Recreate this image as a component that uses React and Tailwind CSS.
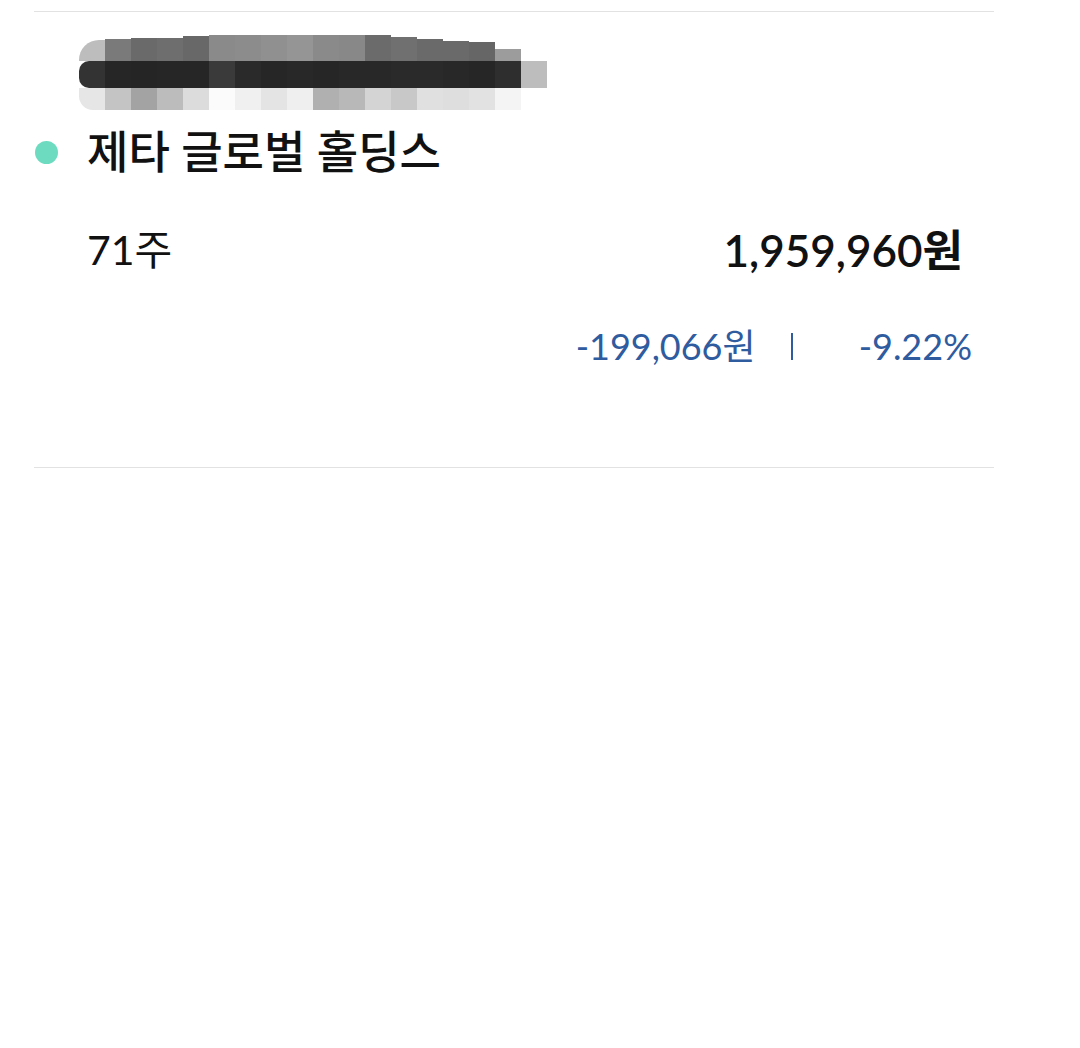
// Holdings row: stock name, share count, value and return
const FONT = { fontFamily: 'Lato, "Noto Sans CJK KR", "Noto Sans", sans-serif' }

// redaction mosaic, one entry per 26px column: [top, middle, bottom]
const MOSAIC = [
  ['h-[21px] mt-[5px] bg-[#bdbdbd] rounded-tl-[20px]', 'bg-[#333333] rounded-l-[10px]', 'bg-[#e6e6e6] rounded-bl-[14px]'],
  ['h-[22px] mt-[4px] bg-[#7a7a7a]', 'bg-[#262626]', 'bg-[#c4c4c4]'],
  ['h-[23px] mt-[3px] bg-[#6a6a6a]', 'bg-[#252525]', 'bg-[#a3a3a3]'],
  ['h-[23px] mt-[3px] bg-[#6e6e6e]', 'bg-[#262626]', 'bg-[#bcbcbc]'],
  ['h-[25px] mt-[1px] bg-[#686868]', 'bg-[#262626]', 'bg-[#dcdcdc]'],
  ['h-[26px] bg-[#8a8a8a]', 'bg-[#3a3a3a]', 'bg-[#fbfbfb]'],
  ['h-[26px] bg-[#8c8c8c]', 'bg-[#2a2a2a]', 'bg-[#f0f0f0]'],
  ['h-[26px] bg-[#909090]', 'bg-[#262626]', 'bg-[#e4e4e4]'],
  ['h-[26px] bg-[#959595]', 'bg-[#282828]', 'bg-[#efefef]'],
  ['h-[26px] bg-[#8a8a8a]', 'bg-[#262626]', 'bg-[#b0b0b0]'],
  ['h-[26px] bg-[#888888]', 'bg-[#282828]', 'bg-[#b8b8b8]'],
  ['h-[26px] bg-[#6b6b6b]', 'bg-[#282828]', 'bg-[#d4d4d4]'],
  ['h-[24px] mt-[2px] bg-[#707070]', 'bg-[#2a2a2a]', 'bg-[#c8c8c8]'],
  ['h-[22px] mt-[4px] bg-[#6a6a6a]', 'bg-[#2a2a2a]', 'bg-[#e0e0e0]'],
  ['h-[20px] mt-[6px] bg-[#6a6a6a]', 'bg-[#282828]', 'bg-[#dedede]'],
  ['h-[19px] mt-[7px] bg-[#666666]', 'bg-[#262626]', 'bg-[#e2e2e2]'],
  ['h-[12px] mt-[14px] bg-[#9c9c9c]', 'bg-[#2e2e2e]', 'bg-[#f4f4f4]'],
  ['h-[26px] bg-transparent', 'bg-[#bdbdbd]', 'bg-transparent'],
]

function Mosaic() {
  return (
    <div className="flex pl-[45px]">
      {MOSAIC.map(([top, mid, bot], i) => (
        <div key={i} className="flex flex-col w-[26px]">
          <div className={top} />
          <div className={`h-[27px] ${mid}`} />
          <div className={`h-[22px] ${bot}`} />
        </div>
      ))}
    </div>
  )
}

export default function App() {
  return (
    <div className="w-[1080px] h-[1048px] bg-white px-[34px] pr-[86px]" style={FONT}>
      <div className="pt-[11px]">
        <div className="border-t border-[#e2e2e2]" />
      </div>

      <div className="h-[112px] pt-[23px]">
        <Mosaic />
      </div>

      <div className="flex items-center h-[56px]">
        <span className="ml-px w-[23px] h-[23px] rounded-full bg-[#6cdbc0]" />
        <span className="ml-[29px] text-[45px] leading-[56px] font-medium text-[#111111]">
          제타 글로벌 홀딩스
        </span>
      </div>

      <div className="mt-[42px] flex items-center justify-between h-[56px] pl-[53px] pr-[31px]">
        <span className="text-[41px] leading-[56px] text-[#111111]">71주</span>
        <span className="text-[44px] leading-[56px] font-semibold text-[#111111]">1,959,960원</span>
      </div>

      <div className="mt-[40px] flex items-center justify-end h-[56px] pr-[22px] text-[36px] leading-[56px] text-[#2f5b9f]">
        <span>-199,066원</span>
        <span className="ml-[35px] w-[2px] h-[27px] bg-[#2f5b9f]" />
        <span className="ml-[66px]">-9.22%</span>
      </div>

      <div className="mt-[93px] border-t border-[#e2e2e2]" />
    </div>
  )
}
